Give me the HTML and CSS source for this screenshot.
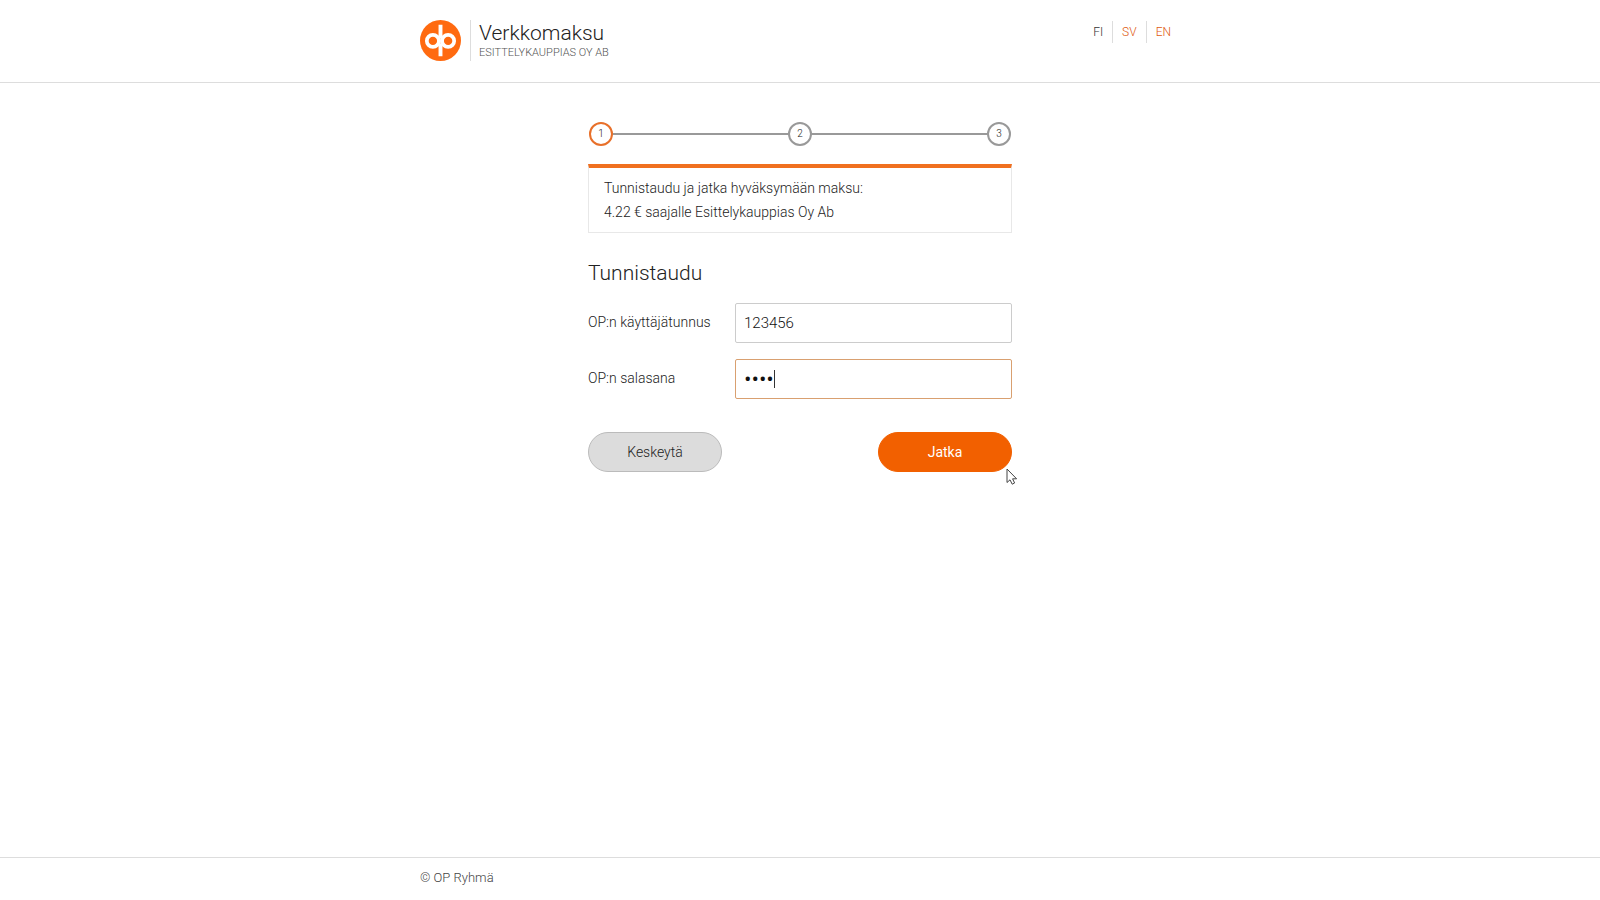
FILE: index.html
```html
<!DOCTYPE html>
<html lang="fi">
<head>
<meta charset="utf-8">
<meta name="viewport" content="width=device-width, initial-scale=1">
<title>Verkkomaksu</title>
<link rel="stylesheet" href="styles.css">
</head>
<body>
<header class="header">
  <div class="container header-row">
    <div class="brand">
      <svg class="logo" viewBox="0 0 42 42" aria-hidden="true">
        <circle cx="21" cy="21" r="21" fill="#ff6a10"/>
        <g fill="none" stroke="#fff" stroke-width="3.8">
          <circle cx="13.2" cy="21.4" r="6.2"/>
          <circle cx="28.8" cy="21.4" r="6.2"/>
          <path d="M21 4.8V18.5M21 24.3V37.2" stroke-width="4"/>
          <path d="M19.6 17V25.8M22.4 17V25.8" stroke-width="2.4"/>
        </g>
      </svg>
      <div class="brand-text">
        <h1 class="brand-title">Verkkomaksu</h1>
        <p class="brand-merchant">ESITTELYKAUPPIAS OY AB</p>
      </div>
    </div>
    <nav class="languages">
      <a class="language language-current" href="#fi">FI</a>
      <a class="language" href="#sv">SV</a>
      <a class="language" href="#en">EN</a>
    </nav>
  </div>
</header>

<main class="main">
  <ol class="steps">
    <li class="step step-current">1</li>
    <li class="step">2</li>
    <li class="step">3</li>
  </ol>
  <div class="notice">
    <p>Tunnistaudu ja jatka hyväksymään maksu:</p>
    <p>4.22 € saajalle Esittelykauppias Oy Ab</p>
  </div>
  <form class="login">
    <h2 class="login-title">Tunnistaudu</h2>
    <div class="field">
      <label for="user">OP:n käyttäjätunnus</label>
      <input class="input" id="user" type="text" value="123456">
    </div>
    <div class="field">
      <label for="password">OP:n salasana</label>
      <div class="input-wrap">
        <input class="input input-active" id="password" type="password" value="1234">
        <span class="caret"></span>
      </div>
    </div>
    <div class="actions">
      <button class="button" type="button">Keskeytä</button>
      <button class="button button-primary" type="button">Jatka</button>
      <svg class="pointer" viewBox="0 0 12 18" aria-hidden="true">
        <path d="M1 1V14.5L4 11.8L6.2 16.2L8.6 15L6.6 10.8H10.6Z" fill="#fff" stroke="#444" stroke-width="1"/>
      </svg>
    </div>
  </form>
</main>

<footer class="footer">
  <div class="container">© OP Ryhmä</div>
</footer>
</body>
</html>
```
FILE: styles.css
```css
* {
  box-sizing: border-box;
}

body {
  display: flex;
  flex-direction: column;
  min-height: 100vh;
  margin: 0;
  background: #fff;
  color: #222;
  font-family: Roboto, "Liberation Sans", sans-serif;
  font-size: 14px;
  font-weight: 300;
  line-height: 24px;
}

h1,
h2,
p {
  margin: 0;
  font-weight: 300;
}

.container {
  width: 100%;
  max-width: 760px;
  margin: 0 auto;
}

.header {
  padding: 20px 0 21px;
  border-bottom: 1px solid #ddd;
}

.header-row {
  display: flex;
  justify-content: space-between;
  align-items: flex-start;
}

.brand {
  display: flex;
  gap: 9px;
}

.logo {
  width: 41px;
  height: 41px;
}

.brand-text {
  padding-left: 8px;
  border-left: 1px solid #ddd;
}

.brand-title {
  color: #222;
  font-size: 21px;
  line-height: 26px;
}

.brand-merchant {
  color: #555;
  font-size: 11px;
  line-height: 14px;
}

.languages {
  display: flex;
  padding-top: 1px;
}

.language {
  padding: 0 9px;
  color: #e05a10;
  font-size: 12px;
  line-height: 22px;
  text-decoration: none;
}

.language + .language {
  border-left: 1px solid #ddd;
}

.language-current {
  color: #333;
}

.main {
  flex: 1;
  width: 100%;
  max-width: 424px;
  margin: 0 auto;
  padding-top: 39px;
}

.steps {
  display: flex;
  justify-content: space-between;
  margin: 0 0 18px;
  padding: 0 1px;
  background: linear-gradient(#999, #999) center / 400px 2px no-repeat;
  list-style: none;
}

.step {
  width: 24px;
  height: 24px;
  border: 2px solid #999;
  border-radius: 50%;
  background: #fff;
  font-size: 10px;
  line-height: 20px;
  text-align: center;
}

.step-current {
  border-color: #e8702a;
}

.notice {
  padding: 8px 15px;
  border: 1px solid #e8e8e8;
  border-top: 4px solid #f07020;
}

.login-title {
  margin: 24px 0 14px;
  font-size: 21px;
  line-height: 32px;
}

.field {
  display: grid;
  grid-template-columns: 147px 1fr;
  align-items: center;
  margin-bottom: 16px;
}

.field label {
  padding-bottom: 2px;
}

.input-wrap {
  position: relative;
}

.input {
  display: block;
  width: 100%;
  height: 40px;
  padding: 0 8px;
  border: 1px solid #ccc;
  border-radius: 2px;
  background: #fff;
  color: #111;
  font: inherit;
  font-size: 15px;
}

.input-active {
  border-color: #d9a070;
  outline: none;
  font-size: 23px;
}

.caret {
  position: absolute;
  top: 11px;
  left: 39px;
  width: 1px;
  height: 18px;
  background: #333;
}

.actions {
  position: relative;
  display: flex;
  justify-content: space-between;
  margin-top: 33px;
}

.button {
  width: 134px;
  height: 40px;
  padding: 0;
  border: 1px solid #bbb;
  border-radius: 20px;
  background: #dcdcdc;
  color: #222;
  font: inherit;
}

.button-primary {
  border-color: #f26000;
  background: #f26000;
  color: #fff;
  font-weight: 400;
}

.pointer {
  position: absolute;
  top: 36px;
  right: -6px;
  width: 12px;
  height: 18px;
}

.footer {
  padding: 8px 0 10px;
  border-top: 1px solid #ddd;
  color: #444;
  font-size: 13px;
}
```
